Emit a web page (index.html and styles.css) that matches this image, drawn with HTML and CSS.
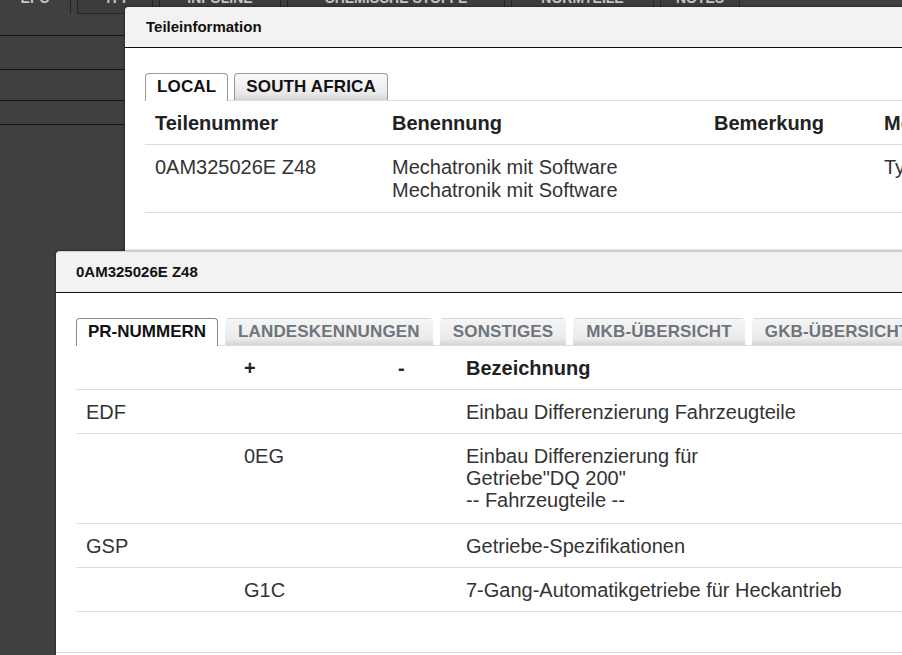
FILE: index.html
```html
<!DOCTYPE html>
<html lang="de">
<head>
  <meta charset="UTF-8">
  <title>Teileinformation</title>
  <link rel="stylesheet" href="styles.css">
</head>
<body>

<div id="desk">
  <div id="top-tabs">
    <div class="top-tab active"><span>EPC</span></div>
    <div class="top-tab"><span>TPI</span></div>
    <div class="top-tab"><span>INFOLINE</span></div>
    <div class="top-tab"><span>CHEMISCHE STOFFE</span></div>
    <div class="top-tab"><span>NORMTEILE</span></div>
    <div class="top-tab"><span>NOTES</span></div>
  </div>
  <div id="side-list">
    <div class="side-row r1"></div>
    <div class="side-row r2"></div>
    <div class="side-row r3"></div>
    <div class="side-row r4"></div>
  </div>
</div>

<div class="dialog" id="dlg-parts">
  <div class="dlg-head">Teileinformation</div>
  <div class="dlg-body">
    <div class="tabs">
      <div class="tab active">LOCAL</div>
      <div class="tab">SOUTH AFRICA</div>
    </div>
    <table class="grid grid-parts">
      <colgroup>
        <col style="width:237px"><col style="width:322px"><col style="width:170px"><col>
      </colgroup>
      <tr>
        <th>Teilenummer</th>
        <th>Benennung</th>
        <th>Bemerkung</th>
        <th>Modellangabe</th>
      </tr>
      <tr>
        <td>0AM325026E Z48</td>
        <td>Mechatronik mit Software<br>Mechatronik mit Software</td>
        <td></td>
        <td>Typ DQ200</td>
      </tr>
    </table>
  </div>
</div>

<div class="dialog" id="dlg-pr">
  <div class="dlg-head">0AM325026E Z48</div>
  <div class="dlg-body">
    <div class="tabs muted">
      <div class="tab active">PR-NUMMERN</div>
      <div class="tab">LANDESKENNUNGEN</div>
      <div class="tab">SONSTIGES</div>
      <div class="tab">MKB-ÜBERSICHT</div>
      <div class="tab">GKB-ÜBERSICHT</div>
    </div>
    <table class="grid grid-pr">
      <colgroup>
        <col style="width:158px"><col style="width:154px"><col style="width:68px"><col>
      </colgroup>
      <tr>
        <th></th>
        <th>+</th>
        <th>-</th>
        <th>Bezeichnung</th>
      </tr>
      <tr>
        <td>EDF</td>
        <td></td>
        <td></td>
        <td>Einbau Differenzierung Fahrzeugteile</td>
      </tr>
      <tr>
        <td></td>
        <td>0EG</td>
        <td></td>
        <td class="multi">Einbau Differenzierung für<br>Getriebe"DQ 200"<br>-- Fahrzeugteile --</td>
      </tr>
      <tr>
        <td>GSP</td>
        <td></td>
        <td></td>
        <td>Getriebe-Spezifikationen</td>
      </tr>
      <tr>
        <td></td>
        <td>G1C</td>
        <td></td>
        <td>7-Gang-Automatikgetriebe für Heckantrieb</td>
      </tr>
    </table>
  </div>
  <div class="dlg-foot"></div>
</div>

</body>
</html>
```

FILE: styles.css
```css
body {
    margin: 0;
    padding: 0;
    background: #404040;
    font-family: "Liberation Sans", Arial, sans-serif;
    color: #333;
    height: 655px;
    overflow: hidden;
}

#desk {
    width: 902px;
}

#top-tabs {
    display: flex;
    gap: 6px;
    height: 13px;
}

.top-tab {
    box-sizing: border-box;
    height: 14px;
    overflow: hidden;
    border: 1px solid #262626;
    border-top: none;
    background: #3c3c3c;
    color: #c4c4c4;
    font-size: 14px;
    font-weight: bold;
    text-align: center;
}

.top-tab span {
    display: block;
    margin-top: -11px;
    line-height: 18px;
}

.top-tab.active {
    border-bottom: none;
    border-left: none;
    background: #404040;
}

.top-tab:nth-child(1) { width: 71px; }
.top-tab:nth-child(2) { width: 76px; }
.top-tab:nth-child(3) { width: 122px; }
.top-tab:nth-child(4) { width: 218px; }
.top-tab:nth-child(5) { width: 143px; }
.top-tab:nth-child(6) { width: 80px; }

#side-list {
    width: 125px;
}

.side-row {
    border-bottom: 1px solid #141414;
}

.side-row.r1 { height: 22px; }
.side-row.r2 { height: 33px; }
.side-row.r3 { height: 30px; }
.side-row.r4 { height: 23px; }

.dialog {
    position: absolute;
    background: #fff;
    border-radius: 4px 0 0 0;
    box-shadow: 0 0 3px rgba(0, 0, 0, 0.6);
    overflow: hidden;
}

#dlg-parts {
    left: 125px;
    top: 7px;
    width: 820px;
    height: 700px;
}

#dlg-pr {
    left: 56px;
    top: 251px;
    width: 900px;
    height: 420px;
    border-top: 1px solid #cfcfcf;
}

.dlg-head {
    height: 40px;
    line-height: 40px;
    padding-left: 21px;
    background: #f2f2f2;
    border-bottom: 1px solid #111;
    color: #111;
    font-size: 15px;
    font-weight: bold;
}

#dlg-pr .dlg-head {
    padding-left: 20px;
}

.dlg-body {
    padding: 25px 0 0 20px;
}

#dlg-pr .dlg-body {
    box-sizing: border-box;
    height: 359px;
}

.dlg-foot {
    border-top: 1px solid #dcdcdc;
}

.tabs {
    display: flex;
    gap: 6px;
    height: 27px;
    border-bottom: 1px solid #dedede;
    white-space: nowrap;
}

.tab {
    box-sizing: border-box;
    height: 27px;
    padding: 0 11px;
    line-height: 26px;
    border: 1px solid #9a9a9a;
    border-bottom: none;
    border-radius: 4px 4px 0 0;
    background: linear-gradient(#fbfbfb, #e9e9e9 75%, #d2d2d2);
    color: #111;
    font-size: 17px;
    font-weight: bold;
    letter-spacing: 0.15px;
}

.tab.active {
    height: 28px;
    background: #fff;
    position: relative;
}

.tabs.muted {
    gap: 7px;
}

.tabs.muted .tab {
    border-color: transparent;
    color: #6e757c;
    padding: 0 12px;
    background: linear-gradient(#f5f5f5, #ebebeb 75%, #d4d4d4);
}

.tabs.muted .tab.active {
    padding: 0 11px;
    border-color: #8a8a8a;
    color: #111;
    background: #fff;
    letter-spacing: 0;
}

.grid {
    border-collapse: collapse;
    table-layout: fixed;
    font-size: 20px;
    line-height: 22px;
}

.grid-parts {
    width: 790px;
}

.grid-pr {
    width: 840px;
}

.grid th,
.grid td {
    padding: 11px 10px 10px;
    border-bottom: 1px solid #dedede;
    text-align: left;
    vertical-align: top;
    white-space: nowrap;
    overflow: hidden;
}

.grid th {
    color: #222;
    font-weight: bold;
}

.grid-parts td {
    line-height: 23px;
}

.grid td.multi {
    padding-bottom: 12px;
}
```
